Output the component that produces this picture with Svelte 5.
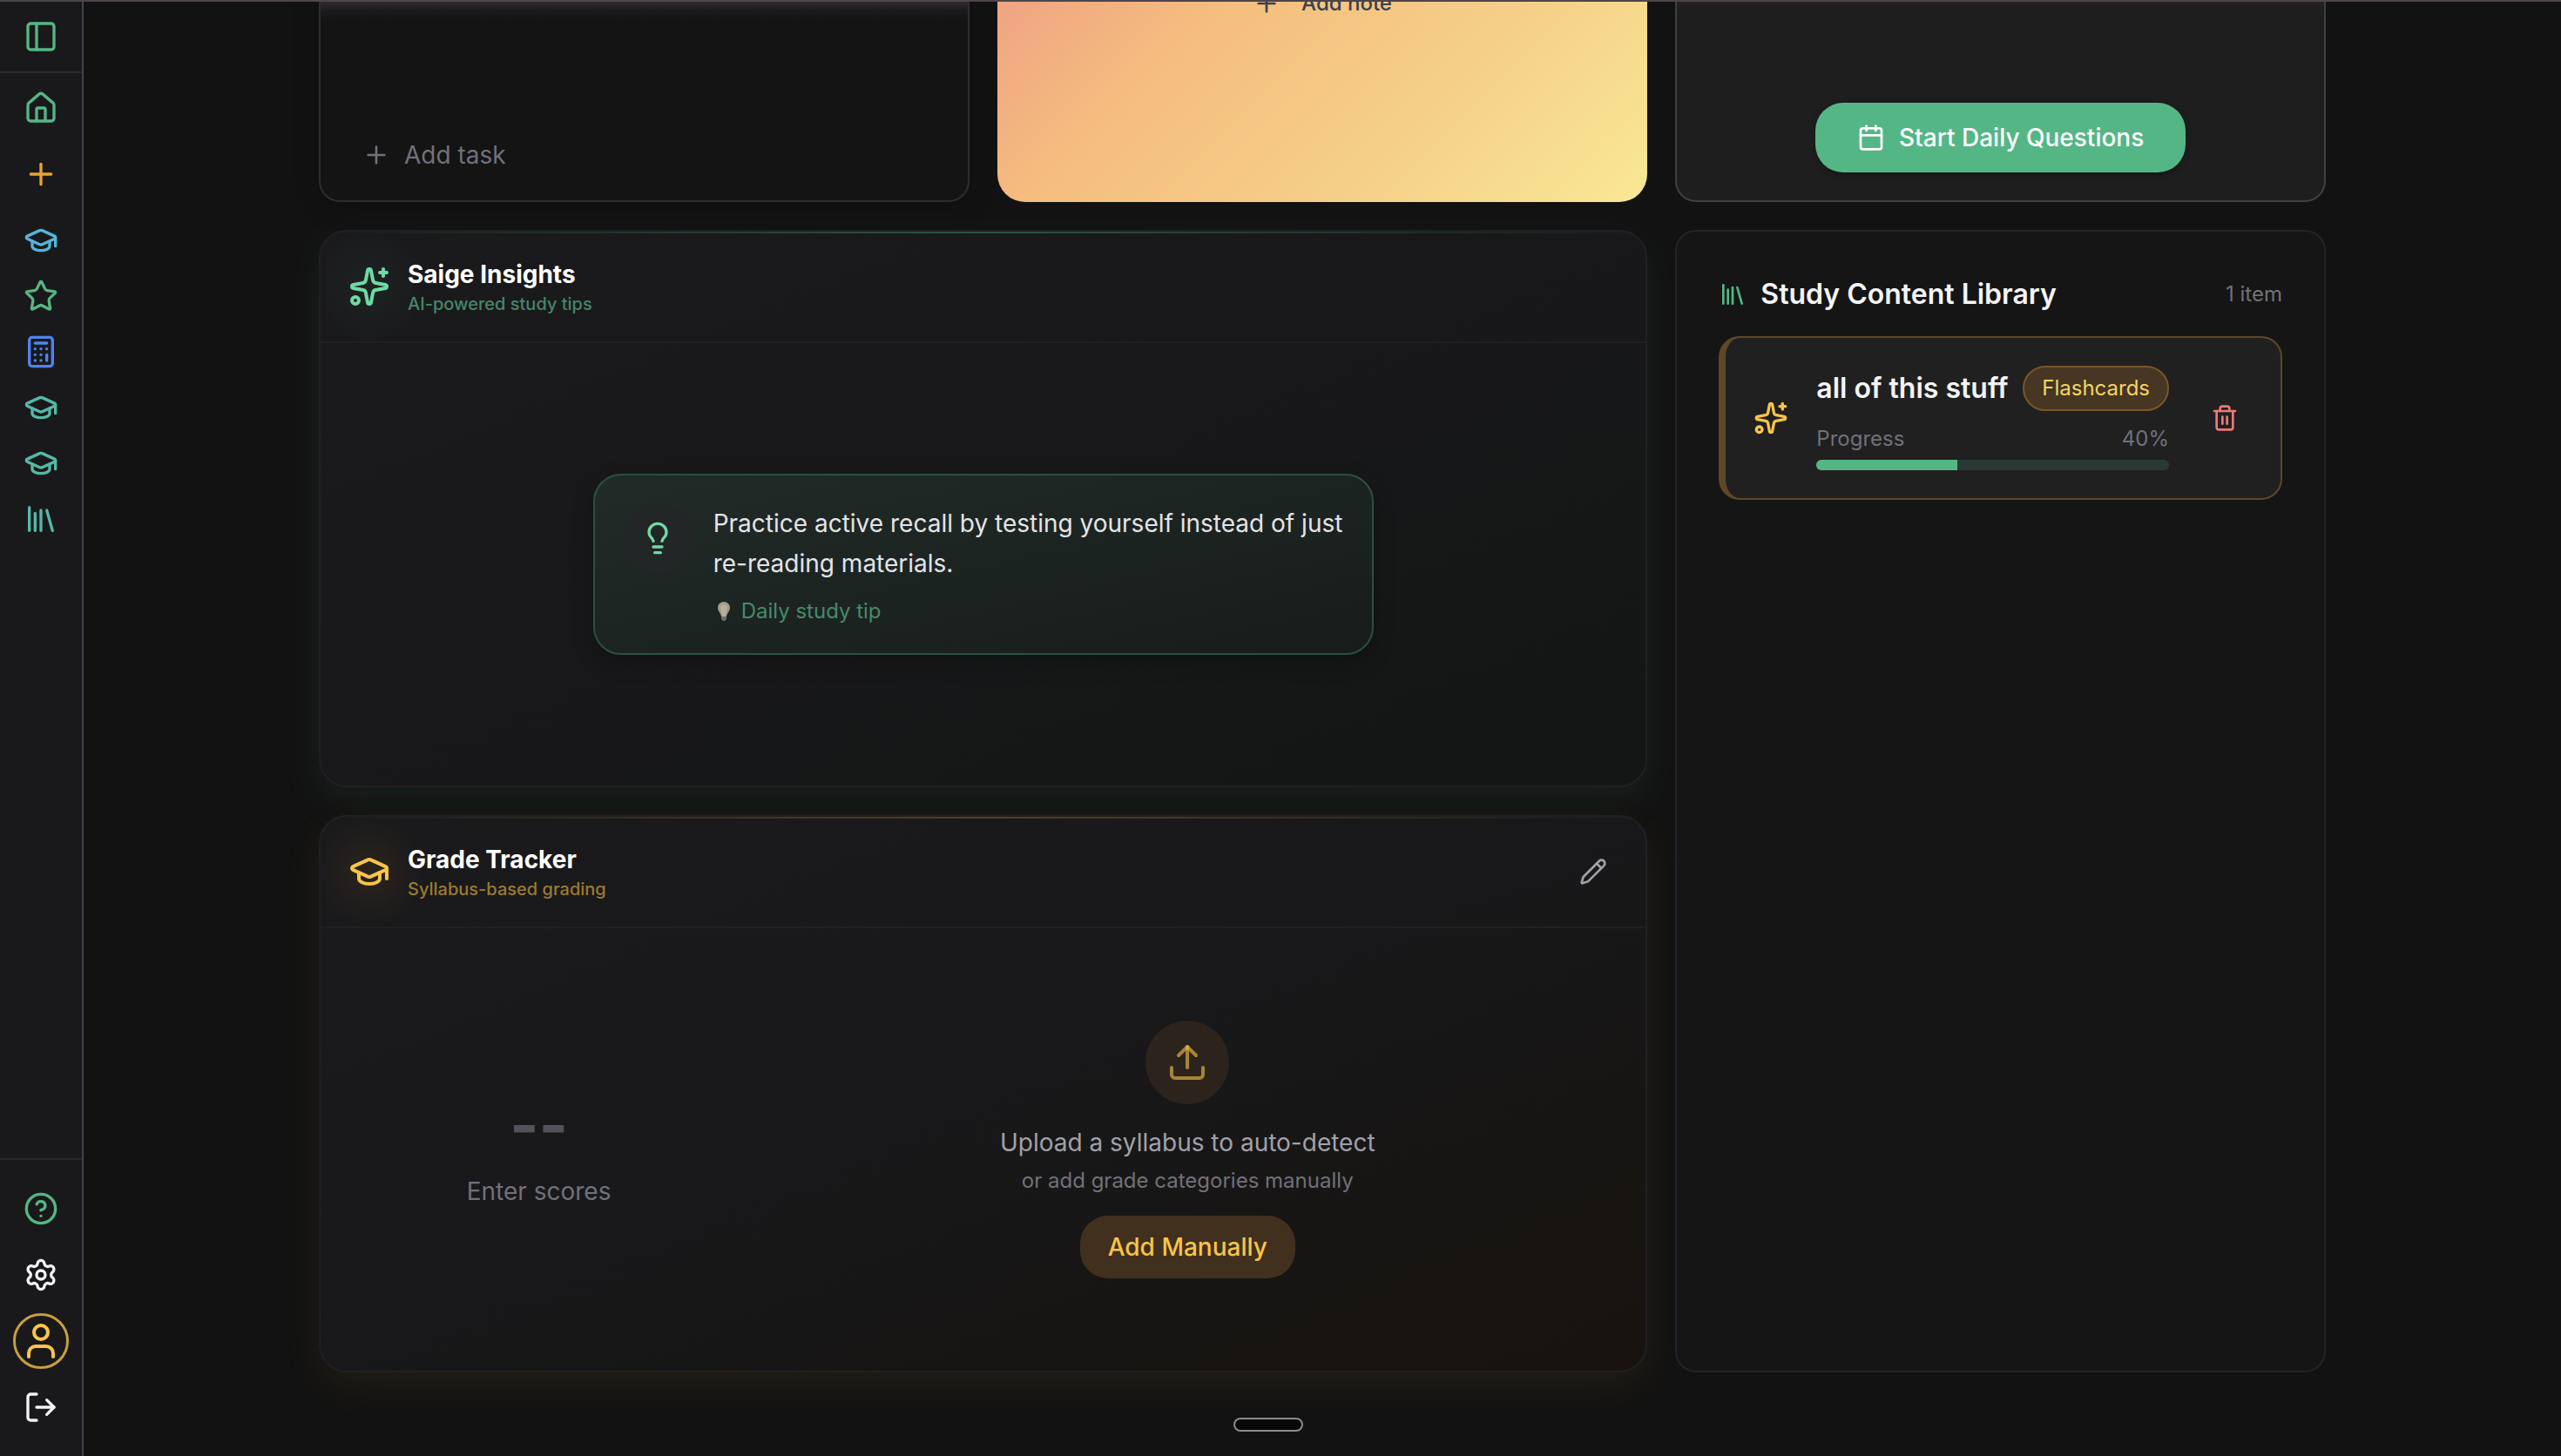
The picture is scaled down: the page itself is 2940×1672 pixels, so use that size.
<script lang="ts">
    const icons = {
        panel: `<rect width="18" height="18" x="3" y="3" rx="2"/><path d="M9 3v18"/>`,
        home: `<path d="M15 21v-8a1 1 0 0 0-1-1h-4a1 1 0 0 0-1 1v8"/><path d="M3 10a2 2 0 0 1 .709-1.528l7-5.999a2 2 0 0 1 2.582 0l7 5.999A2 2 0 0 1 21 10v9a2 2 0 0 1-2 2H5a2 2 0 0 1-2-2z"/>`,
        plus: `<path d="M5 12h14"/><path d="M12 5v14"/>`,
        cap: `<path d="M21.42 10.922a1 1 0 0 0-.019-1.838L12.83 5.18a2 2 0 0 0-1.66 0L2.6 9.08a1 1 0 0 0 0 1.832l8.57 3.908a2 2 0 0 0 1.66 0z"/><path d="M22 10v6"/><path d="M6 12.5V16a6 3 0 0 0 12 0v-3.5"/>`,
        star: `<path d="M11.525 2.295a.53.53 0 0 1 .95 0l2.31 4.679a2.123 2.123 0 0 0 1.595 1.16l5.166.756a.53.53 0 0 1 .294.904l-3.736 3.638a2.123 2.123 0 0 0-.611 1.878l.882 5.14a.53.53 0 0 1-.771.56l-4.618-2.428a2.122 2.122 0 0 0-1.973 0L6.396 21.01a.53.53 0 0 1-.77-.56l.881-5.139a2.122 2.122 0 0 0-.611-1.879L2.16 9.795a.53.53 0 0 1 .294-.906l5.165-.755a2.122 2.122 0 0 0 1.597-1.16z"/>`,
        calculator: `<rect width="16" height="20" x="4" y="2" rx="2"/><path d="M8 6h8"/><path d="M16 14v4"/><path d="M16 10h.01"/><path d="M12 10h.01"/><path d="M8 10h.01"/><path d="M12 14h.01"/><path d="M8 14h.01"/><path d="M12 18h.01"/><path d="M8 18h.01"/>`,
        library: `<path d="m16 6 4 14"/><path d="M12 6v14"/><path d="M8 8v12"/><path d="M4 4v16"/>`,
        help: `<circle cx="12" cy="12" r="10"/><path d="M9.09 9a3 3 0 0 1 5.83 1c0 2-3 3-3 3"/><path d="M12 17h.01"/>`,
        settings: `<path d="M9.671 4.136a2.34 2.34 0 0 1 4.659 0 2.34 2.34 0 0 0 3.319 1.915 2.34 2.34 0 0 1 2.33 4.033 2.34 2.34 0 0 0 0 3.831 2.34 2.34 0 0 1-2.33 4.033 2.34 2.34 0 0 0-3.319 1.915 2.34 2.34 0 0 1-4.659 0 2.34 2.34 0 0 0-3.32-1.915 2.34 2.34 0 0 1-2.33-4.033 2.34 2.34 0 0 0 0-3.831A2.34 2.34 0 0 1 6.35 6.051a2.34 2.34 0 0 0 3.319-1.915"/><circle cx="12" cy="12" r="3"/>`,
        user: `<path d="M19 21v-2a4 4 0 0 0-4-4H9a4 4 0 0 0-4 4v2"/><circle cx="12" cy="7" r="4"/>`,
        logout: `<path d="m16 17 5-5-5-5"/><path d="M21 12H9"/><path d="M9 21H5a2 2 0 0 1-2-2V5a2 2 0 0 1 2-2h4"/>`,
        calendar: `<path d="M8 2v4"/><path d="M16 2v4"/><rect width="18" height="18" x="3" y="4" rx="2"/><path d="M3 10h18"/>`,
        sparkles: `<path d="M11.017 2.814a1 1 0 0 1 1.966 0l1.051 5.558a2 2 0 0 0 1.594 1.594l5.558 1.051a1 1 0 0 1 0 1.966l-5.558 1.051a2 2 0 0 0-1.594 1.594l-1.051 5.558a1 1 0 0 1-1.966 0l-1.051-5.558a2 2 0 0 0-1.594-1.594l-5.558-1.051a1 1 0 0 1 0-1.966l5.558-1.051a2 2 0 0 0 1.594-1.594z"/><path d="M20 2v4"/><path d="M22 4h-4"/><circle cx="4" cy="20" r="2"/>`,
        bulb: `<path d="M15 14c.2-1 .7-1.7 1.5-2.5 1-.9 1.5-2.2 1.5-3.5A6 6 0 0 0 6 8c0 1 .2 2.2 1.5 3.5.7.7 1.3 1.5 1.5 2.5"/><path d="M9 18h6"/><path d="M10 22h4"/>`,
        pencil: `<path d="M21.174 6.812a1 1 0 0 0-3.986-3.987L3.842 16.174a2 2 0 0 0-.5.83l-1.321 4.352a.5.5 0 0 0 .623.622l4.353-1.32a2 2 0 0 0 .83-.497z"/><path d="m15 5 4 4"/>`,
        upload: `<path d="M12 3v12"/><path d="m17 8-5-5-5 5"/><path d="M21 15v4a2 2 0 0 1-2 2H5a2 2 0 0 1-2-2v-4"/>`,
        trash: `<path d="M10 11v6"/><path d="M14 11v6"/><path d="M19 6v14a2 2 0 0 1-2 2H7a2 2 0 0 1-2-2V6"/><path d="M3 6h18"/><path d="M8 6V4a2 2 0 0 1 2-2h4a2 2 0 0 1 2 2v2"/>`,
    };

    type IconName = keyof typeof icons;

    const classes: { label: string; icon: IconName; tone: string }[] = [
        { label: "Class 1", icon: "cap", tone: "sky" },
        { label: "Favorites", icon: "star", tone: "green" },
        { label: "Calculator", icon: "calculator", tone: "blue" },
        { label: "Class 2", icon: "cap", tone: "teal" },
        { label: "Class 3", icon: "cap", tone: "teal" },
        { label: "Library", icon: "library", tone: "teal" },
    ];

    const items = $state([
        { title: "all of this stuff", kind: "Flashcards", progress: 40 },
    ]);
</script>

{#snippet icon(name: IconName, size: number)}
    <svg
        width={size}
        height={size}
        viewBox="0 0 24 24"
        fill="none"
        stroke="currentColor"
        stroke-width="2"
        stroke-linecap="round"
        stroke-linejoin="round"
        aria-hidden="true"
    >
        {@html icons[name]}
    </svg>
{/snippet}

<div class="shell">
    <aside>
        <div class="toggle">
            <button class="nav-item green" aria-label="Toggle sidebar">
                {@render icon("panel", 40)}
            </button>
        </div>
        <nav class="primary">
            <a class="nav-item green" href="#home" aria-label="Home">
                {@render icon("home", 40)}
            </a>
            <a class="nav-item orange" href="#new" aria-label="New class">
                {@render icon("plus", 40)}
            </a>
            <div class="classes">
                {#each classes as item}
                    <a
                        class="nav-item {item.tone}"
                        href="#class"
                        aria-label={item.label}
                    >
                        {@render icon(item.icon, 40)}
                    </a>
                {/each}
            </div>
        </nav>
        <nav class="secondary">
            <a class="nav-item green" href="#help" aria-label="Help">
                {@render icon("help", 40)}
            </a>
            <a class="nav-item" href="#settings" aria-label="Settings">
                {@render icon("settings", 40)}
            </a>
            <a class="nav-item profile" href="#profile" aria-label="Profile">
                {@render icon("user", 48)}
            </a>
            <button class="nav-item" aria-label="Log out">
                {@render icon("logout", 40)}
            </button>
        </nav>
    </aside>

    <main>
        <div class="dashboard">
            <section class="top-card tasks">
                <button class="add-task">
                    {@render icon("plus", 32)}
                    Add task
                </button>
            </section>

            <section class="top-card notes">
                <button class="add-note">
                    {@render icon("plus", 32)}
                    Add note
                </button>
            </section>

            <section class="top-card daily">
                <button class="start">
                    {@render icon("calendar", 32)}
                    Start Daily Questions
                </button>
            </section>

            <div class="column">
                <section class="panel insights">
                    <header>
                        <span class="badge-icon">
                            {@render icon("sparkles", 48)}
                        </span>
                        <div class="heading">
                            <h2>Saige Insights</h2>
                            <p>AI-powered study tips</p>
                        </div>
                    </header>
                    <div class="insight-body">
                        <article class="tip">
                            <span class="tip-icon">
                                {@render icon("bulb", 40)}
                            </span>
                            <div>
                                <p class="tip-text">
                                    Practice active recall by testing yourself
                                    instead of just re-reading materials.
                                </p>
                                <p class="tip-note">
                                    <svg
                                        width="24"
                                        height="24"
                                        viewBox="0 0 24 24"
                                        aria-hidden="true"
                                    >
                                        <path
                                            d="M12 1c-4 0-7 3-7 7 0 4 3 5 4 10h6c1-5 4-6 4-10 0-4-3-7-7-7z"
                                            fill="#a39c7c"
                                        />
                                        <path
                                            d="M12 4c-3 0-4 2-4 4 0 3 2 5 2 10h4c0-5 2-7 2-10 0-2-1-4-4-4z"
                                            fill="#b5b0a0"
                                        />
                                        <path
                                            d="M9 18h6v3l-2 2h-2l-2-2z"
                                            fill="#6c7070"
                                        />
                                    </svg>
                                    Daily study tip
                                </p>
                            </div>
                        </article>
                    </div>
                </section>

                <section class="panel grades">
                    <header>
                        <span class="badge-icon">
                            {@render icon("cap", 48)}
                        </span>
                        <div class="heading">
                            <h2>Grade Tracker</h2>
                            <p>Syllabus-based grading</p>
                        </div>
                        <button class="edit" aria-label="Edit grades">
                            {@render icon("pencil", 32)}
                        </button>
                    </header>
                    <div class="grade-body">
                        <div class="score">
                            <strong>--</strong>
                            <span>Enter scores</span>
                        </div>
                        <div class="upload">
                            <span class="upload-icon">
                                {@render icon("upload", 48)}
                            </span>
                            <p class="upload-title">
                                Upload a syllabus to auto-detect
                            </p>
                            <p class="upload-hint">
                                or add grade categories manually
                            </p>
                            <button class="manual">Add Manually</button>
                        </div>
                    </div>
                </section>
            </div>

            <section class="library">
                <header>
                    {@render icon("library", 32)}
                    <h2>Study Content Library</h2>
                    <span class="count">{items.length} item</span>
                </header>
                {#each items as item}
                    <article class="item">
                        <span class="item-icon">
                            {@render icon("sparkles", 40)}
                        </span>
                        <div class="item-main">
                            <div class="item-title">
                                <h3>{item.title}</h3>
                                <span class="kind">{item.kind}</span>
                            </div>
                            <div class="item-progress">
                                <span>Progress</span>
                                <span>{item.progress}%</span>
                            </div>
                            <div
                                class="bar"
                                role="progressbar"
                                aria-label="Progress"
                                aria-valuenow={item.progress}
                            >
                                <div
                                    class="fill"
                                    style="width: {item.progress}%"
                                ></div>
                            </div>
                        </div>
                        <button class="delete" aria-label="Delete item">
                            {@render icon("trash", 32)}
                        </button>
                    </article>
                {/each}
            </section>
        </div>
    </main>

    <button class="handle" aria-label="Open dock"></button>
</div>

<style>
    :global(body) {
        margin: 0;
        background: #121212;
    }

    .shell {
        --green: #55b685;
        --mint: #6edba4;
        --gold: #f9c449;
        --muted: #71717a;

        display: flex;
        box-sizing: border-box;
        min-height: 100vh;
        border-top: 2px solid #4d454b;
        background: #121212;
        color: #f4f4f5;
        font-family: Inter, "Liberation Sans", sans-serif;
        font-size: 28px;
        line-height: 40px;
    }

    h2,
    h3,
    p {
        margin: 0;
    }

    button {
        display: flex;
        align-items: center;
        justify-content: center;
        padding: 0;
        border: none;
        background: none;
        color: inherit;
        font: inherit;
        cursor: pointer;
    }

    svg {
        display: block;
        flex: none;
    }

    /* sidebar */
    aside {
        display: flex;
        flex-direction: column;
        flex: none;
        width: 94px;
        border-right: 2px solid #44434b;
        background: #19191b;
    }

    .toggle {
        display: flex;
        justify-content: center;
        padding: 8px 0;
        border-bottom: 2px solid #29292c;
    }

    .primary,
    .secondary {
        display: flex;
        flex-direction: column;
        align-items: center;
        gap: 12px;
    }

    .primary {
        flex: 1;
        padding: 8px 0;
    }

    .secondary {
        padding: 24px 0;
        border-top: 2px solid #29292c;
    }

    .nav-item {
        display: flex;
        align-items: center;
        justify-content: center;
        box-sizing: border-box;
        width: 64px;
        height: 64px;
        color: #f4f4f5;
    }

    .green {
        color: var(--green);
    }

    .orange {
        color: #e9a13b;
    }

    .sky {
        color: #54b4dc;
    }

    .blue {
        color: #4f83f1;
    }

    .teal {
        color: #55b8a8;
    }

    .profile {
        border: 3px solid #c79f3d;
        border-radius: 50%;
        color: var(--gold);
    }

    /* dashboard */
    main {
        flex: 1;
        min-width: 0;
        overflow: hidden;
    }

    .dashboard {
        display: grid;
        grid-template-columns: repeat(3, minmax(0, 1fr));
        gap: 32px;
        max-width: 2304px;
        margin: -226px auto 0;
        padding-bottom: 96px;
    }

    .top-card {
        display: flex;
        box-sizing: border-box;
        height: 456px;
    }

    .tasks {
        align-items: flex-end;
        padding: 32px 48px;
        border: 2px solid #2d2d31;
        border-radius: 24px;
        background: linear-gradient(#2e2b2e 224px, #1b1b1c 234px, #141414 244px);
        box-shadow: 0 8px 32px rgba(0, 0, 0, 0.15);
    }

    .add-task {
        gap: 16px;
        color: var(--muted);
    }

    .notes {
        align-items: center;
        justify-content: center;
        border-radius: 32px;
        background: linear-gradient(
            135deg,
            #ee9a88 0%,
            #f0a583 20%,
            #f5be7e 41%,
            #f5ce87 68%,
            #f9e896 100%
        );
    }

    .add-note {
        gap: 24px;
        color: #374151;
        font-size: 24px;
        font-weight: 500;
    }

    .daily {
        align-items: flex-end;
        justify-content: center;
        padding: 32px;
        border: 2px solid #3f3f46;
        border-radius: 24px;
        background: linear-gradient(#272426 224px, #1f1f1f 230px, #1e1e1e 236px);
    }

    .start {
        gap: 16px;
        height: 80px;
        padding: 0 48px;
        border-radius: 32px;
        background: var(--green);
        color: #ffffff;
        font-weight: 500;
        box-shadow: 0 2px 6px rgba(0, 0, 0, 0.3);
    }

    .column {
        display: grid;
        grid-column: span 2;
        gap: 32px;
    }

    .panel {
        position: relative;
        display: flex;
        flex-direction: column;
        box-sizing: border-box;
        min-height: 640px;
        border: 2px solid #202023;
        border-radius: 32px;
    }

    /* accent line along the top edge */
    .panel::before {
        content: "";
        position: absolute;
        inset: 0 0 auto;
        height: 2px;
        background: linear-gradient(
            to right,
            transparent,
            var(--line),
            transparent
        );
    }

    .insights {
        --accent: var(--mint);
        --sub: #46866a;
        --line: #2d5344;
        --glow: rgba(85, 182, 133, 0.06);
        background: linear-gradient(
            to bottom right,
            #1a1a1c,
            #18181a 50%,
            #131614
        );
        box-shadow: 0 16px 48px rgba(85, 182, 133, 0.09);
    }

    .grades {
        --accent: var(--gold);
        --sub: #9a7b33;
        --line: #58401f;
        --glow: rgba(249, 150, 40, 0.08);
        background: linear-gradient(
            to bottom right,
            #1a1a1c,
            #18181a 50%,
            #171513 78%,
            #19130f
        );
        box-shadow: 0 16px 48px rgba(249, 180, 73, 0.07);
    }

    .panel header {
        display: flex;
        align-items: center;
        gap: 20px;
        box-sizing: border-box;
        height: 128px;
        padding: 0 32px;
        border-bottom: 2px solid #202023;
        border-radius: 32px 32px 0 0;
        background: radial-gradient(
            circle at 56px 50%,
            var(--glow),
            transparent 64px
        );
    }

    .badge-icon {
        color: var(--accent);
    }

    .heading {
        flex: 1;
    }

    .heading h2 {
        color: #ffffff;
        font-size: 28px;
        font-weight: 700;
        line-height: 40px;
    }

    .heading p {
        color: var(--sub);
        font-size: 20px;
        font-weight: 500;
        line-height: 28px;
    }

    .insight-body {
        display: flex;
        flex: 1;
        align-items: center;
        justify-content: center;
    }

    .tip {
        display: flex;
        align-items: flex-start;
        gap: 24px;
        box-sizing: border-box;
        max-width: 896px;
        padding: 32px;
        border: 2px solid #2b5041;
        border-radius: 32px;
        background: linear-gradient(to bottom right, #212b27, #1c2422, #181c1a);
        box-shadow: 0 8px 24px rgba(0, 0, 0, 0.25);
    }

    .tip-icon {
        display: flex;
        align-items: center;
        justify-content: center;
        flex: none;
        width: 80px;
        height: 80px;
        border-radius: 50%;
        background: #232627;
        color: var(--mint);
    }

    .tip-text {
        color: #e4e4e7;
        line-height: 46px;
    }

    .tip-note {
        display: flex;
        align-items: center;
        gap: 8px;
        margin-top: 16px;
        color: #478a6a;
        font-size: 24px;
        line-height: 32px;
    }

    .edit {
        width: 56px;
        height: 56px;
        color: #a1a1aa;
    }

    .grade-body {
        display: grid;
        grid-template-columns: 3fr 7fr;
        flex: 1;
        align-items: center;
        gap: 56px;
        padding: 0 44px;
    }

    .score,
    .upload {
        display: flex;
        flex-direction: column;
        align-items: center;
        text-align: center;
    }

    .score {
        gap: 16px;
        color: var(--muted);
    }

    .score strong {
        color: #52525b;
        font-size: 72px;
        font-weight: 700;
        line-height: 80px;
    }

    .upload-icon {
        display: flex;
        align-items: center;
        justify-content: center;
        width: 96px;
        height: 96px;
        border-radius: 50%;
        background: #2c231d;
        color: rgba(249, 196, 73, 0.6);
    }

    .upload-title {
        margin-top: 24px;
        color: #a1a1aa;
    }

    .upload-hint {
        margin-top: 8px;
        color: var(--muted);
        font-size: 24px;
        line-height: 32px;
    }

    .manual {
        height: 72px;
        margin-top: 24px;
        padding: 0 32px;
        border-radius: 32px;
        background: #41301e;
        color: var(--gold);
        font-weight: 500;
    }

    /* content library */
    .library {
        position: relative;
        padding: 48px;
        border: 2px solid #242428;
        border-radius: 24px;
        background: #151515;
    }

    .library header {
        display: flex;
        align-items: center;
        gap: 16px;
        margin-bottom: 24px;
        color: var(--green);
    }

    .library h2 {
        flex: 1;
        color: #f4f4f5;
        font-size: 32px;
        font-weight: 600;
        line-height: 48px;
    }

    .count {
        color: var(--muted);
        font-size: 24px;
    }

    .item {
        display: flex;
        align-items: center;
        gap: 32px;
        padding: 32px;
        border: 2px solid #5e4826;
        border-left-width: 8px;
        border-radius: 24px;
        background: #202020;
    }

    .item-icon {
        color: var(--gold);
    }

    .item-main {
        flex: 1;
        min-width: 0;
    }

    .item-title,
    .item-progress {
        display: flex;
        align-items: center;
        justify-content: space-between;
    }

    .item-title h3 {
        font-size: 32px;
        font-weight: 600;
    }

    .kind {
        padding: 8px 20px;
        border: 2px solid #7a5627;
        border-radius: 26px;
        background: #463623;
        color: #f5d565;
        font-size: 24px;
        line-height: 32px;
    }

    .item-progress {
        margin: 16px 0 8px;
        color: var(--muted);
        font-size: 24px;
        line-height: 32px;
    }

    .bar {
        height: 12px;
        overflow: hidden;
        border-radius: 6px;
        background: #2a3a32;
    }

    .fill {
        height: 100%;
        background: var(--green);
    }

    .delete {
        flex: none;
        width: 64px;
        height: 64px;
        color: #ec7a75;
    }

    /* dock handle floating over the page */
    .handle {
        position: fixed;
        bottom: 28px;
        left: calc(50% - 54px);
        box-sizing: border-box;
        width: 80px;
        height: 16px;
        border: 2px solid #8c8c8c;
        border-radius: 8px;
        background: #080808;
    }
</style>
